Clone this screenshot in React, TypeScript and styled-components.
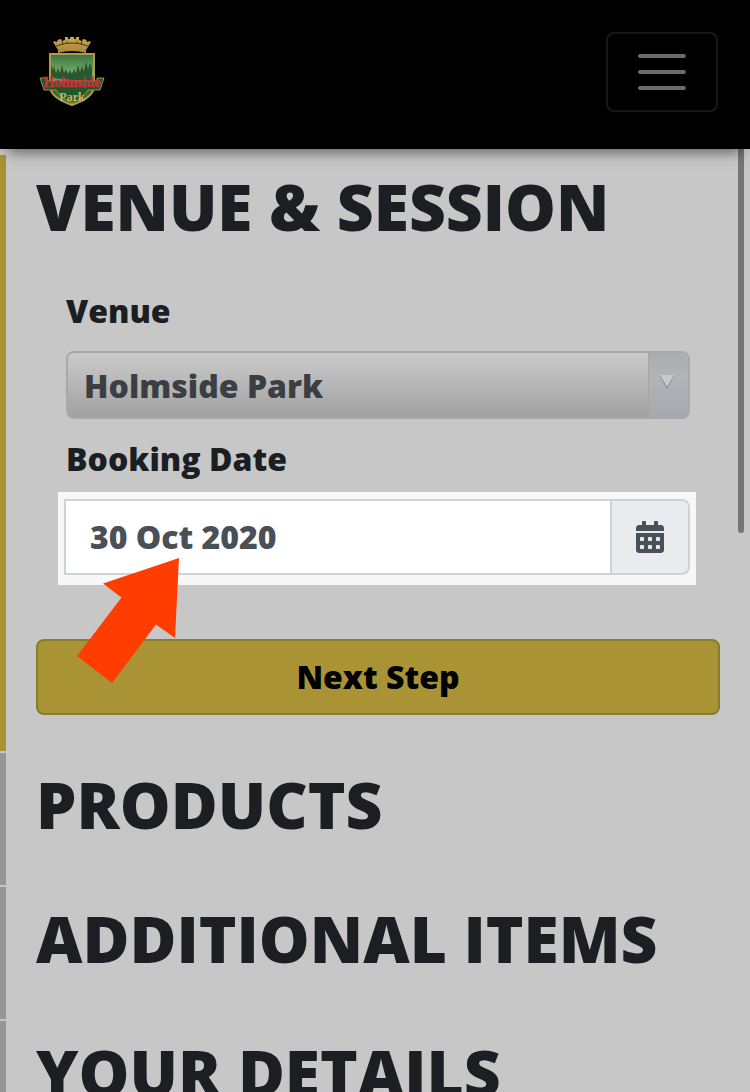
import React from "react";
import styled, { createGlobalStyle } from "styled-components";
import { FaCalendarAlt } from "react-icons/fa";

const GlobalStyle = createGlobalStyle`
  *, *::before, *::after { box-sizing: border-box; }
  body {
    margin: 0;
    background: #c7c7c7;
    color: #1b1e22;
    font-family: "Open Sans", "Noto Sans", sans-serif;
    font-size: 32px;
    font-weight: 800;
    line-height: 48px;
  }
`;

const Shell = styled.div`
  display: flex;
  flex-direction: column;
  height: 100vh;
  overflow: hidden;
`;

const Header = styled.header`
  position: relative;
  z-index: 2;
  flex: none;
  display: flex;
  align-items: flex-start;
  justify-content: space-between;
  padding: 32px 32px 37px 38px;
  background: #000;
  box-shadow: 0 10px 14px -8px rgba(0, 0, 0, 0.6);
`;

const Brand = styled.a`
  display: block;
  padding-top: 4px;
  line-height: 0;
`;

const Toggler = styled.button`
  display: flex;
  flex-direction: column;
  align-items: center;
  justify-content: center;
  gap: 12px;
  width: 112px;
  height: 80px;
  padding: 0;
  border: 2px solid #181818;
  border-radius: 8px;
  background: transparent;
`;

const TogglerBar = styled.span`
  width: 48px;
  height: 4px;
  border-radius: 2px;
  background: #6b6b6b;
`;

const Steps = styled.main`
  position: relative;
  flex: 1;
  min-height: 0;
  overflow: hidden;
  display: flex;
  flex-direction: column;
  gap: 2px;
  padding-top: 6px;
`;

const Step = styled.section<{ $active?: boolean }>`
  flex: none;
  padding: 16px 30px ${(p) => (p.$active ? "36px" : "44px")};
  border-left: 6px solid ${(p) => (p.$active ? "#aa9335" : "#969696")};
`;

const StepTitle = styled.h2`
  margin: 0;
  font-size: 64px;
  font-weight: 800;
  line-height: 72px;
  text-transform: uppercase;
  white-space: nowrap;
`;

const Form = styled.form`
  margin-top: 44px;
`;

const Fields = styled.div`
  padding: 0 30px;
`;

const Label = styled.label`
  display: block;
`;

const SelectWrap = styled.div`
  position: relative;
  margin: 16px 0;
`;

const VenueSelect = styled.select`
  display: block;
  width: 100%;
  height: 68px;
  padding: 2px 58px 0 16px;
  appearance: none;
  border: 2px solid #a6a9ac;
  border-radius: 8px;
  background: linear-gradient(#cbcbcb, #a1a1a1);
  color: #3b3f44;
  font: inherit;
`;

const SelectArrow = styled.span`
  position: absolute;
  top: 2px;
  right: 2px;
  bottom: 2px;
  display: flex;
  align-items: center;
  justify-content: center;
  width: 40px;
  padding: 0 4px 6px 0;
  border-left: 1px solid #a2a6a9;
  border-radius: 0 6px 6px 0;
  background: linear-gradient(#aaaeb1, #b0b4b7 40%, #a6a9ad);
  pointer-events: none;
`;

const Spotlight = styled.div`
  position: relative;
  margin: 9px -6px 54px -8px;
  padding: 7px 6px 10px;
  background: #f7f7f7;
`;

const DateGroup = styled.div`
  display: flex;
  height: 76px;
`;

const DateInput = styled.input`
  flex: 1;
  min-width: 0;
  padding: 0 24px;
  border: 2px solid #ced2d6;
  border-radius: 0;
  background: #fff;
  color: #495057;
  font: inherit;
`;

const DateButton = styled.button`
  display: flex;
  align-items: center;
  justify-content: center;
  width: 78px;
  padding: 0;
  border: 2px solid #ced2d6;
  border-left: 0;
  border-radius: 0 8px 8px 0;
  background: #e8ecef;
  color: #495057;
`;

const Pointer = styled.svg`
  position: absolute;
  left: 19px;
  top: 66px;
  pointer-events: none;
`;

const NextButton = styled.button`
  display: block;
  width: 100%;
  height: 76px;
  border: 2px solid #857c2d;
  border-radius: 8px;
  background: #aa9335;
  color: #000;
  font: inherit;
`;

const ScrollThumb = styled.div`
  position: absolute;
  top: -6px;
  right: 6px;
  width: 6px;
  height: 390px;
  border-radius: 3px;
  background: #757575;
`;

function Logo() {
  return (
    <svg width="68" height="72" viewBox="0 0 68 72" role="img" aria-label="Holmside Park">
      <defs>
        <linearGradient id="sky" x1="0" y1="0" x2="0" y2="1">
          <stop offset="0" stopColor="#35743c" />
          <stop offset="0.4" stopColor="#7fae70" />
          <stop offset="0.75" stopColor="#2f6a2c" />
          <stop offset="1" stopColor="#3f8a2c" />
        </linearGradient>
        <linearGradient id="crown" x1="0" y1="0" x2="0" y2="1">
          <stop offset="0" stopColor="#c9a94e" />
          <stop offset="1" stopColor="#a5843a" />
        </linearGradient>
      </defs>
      <path
        d="M15 6l2-1 1 1 2-1-1-1 4-1 1 2 3-1V1h3v2h2V1h4v2h2V1h3v3l3 1 1-2 4 1-1 1 2 1 1-1 2 1-5 8v3q-14-4-28 0v-3z"
        fill="url(#crown)"
      />
      <path d="M18 10q16-6 32 0M24 5l1 4M44 5l-1 4M29 5v3M39 5v3" stroke="#4e3b12" strokeWidth="1" fill="none" />
      <path d="M12 18h44v33q-1 11-22 18Q13 62 12 51z" fill="url(#sky)" stroke="#b5994b" strokeWidth="2" />
      <path
        d="M13 42V29l2 5 1-4 2 7 2-5 2 5 2-8 2 8 2-4 2 5 2-4 2 4 2-5 2 4 2-8 2 7 2-6 2 5 2-9 2 7 2-6 2 5v14z"
        fill="#27582f"
      />
      <path d="M2 42h7v3h50v-3h7l-4 12H50q-5 8-16 13-11-5-16-13H6z" fill="#1d5a2a" stroke="#a88b40" strokeWidth="1" />
      <g textAnchor="middle" fontFamily="Liberation Serif, serif" fontWeight="700">
        <text x="34" y="51" fontSize="14" fill="#c8323a" stroke="#c8323a" strokeWidth="0.5">
          Holmside
        </text>
        <text x="34" y="65" fontSize="12" fill="#cbb46c">
          Park
        </text>
      </g>
    </svg>
  );
}

export default function App() {
  return (
    <>
      <GlobalStyle />
      <Shell>
        <Header>
          <Brand href="#">
            <Logo />
          </Brand>
          <Toggler type="button" aria-label="Toggle navigation">
            <TogglerBar />
            <TogglerBar />
            <TogglerBar />
          </Toggler>
        </Header>
        <Steps>
          <Step $active>
            <StepTitle>Venue &amp; Session</StepTitle>
            <Form onSubmit={(e) => e.preventDefault()}>
              <Fields>
                <Label htmlFor="venue">Venue</Label>
                <SelectWrap>
                  <VenueSelect id="venue" defaultValue="holmside">
                    <option value="holmside">Holmside Park</option>
                  </VenueSelect>
                  <SelectArrow>
                    <svg width="14" height="14" viewBox="0 0 14 14" aria-hidden="true">
                      <path d="M0 1h14L7 14z" fill="#808488" />
                      <path d="M0 0h14L7 12z" fill="#cacaca" />
                    </svg>
                  </SelectArrow>
                </SelectWrap>
                <Label htmlFor="date">Booking Date</Label>
                <Spotlight>
                  <DateGroup>
                    <DateInput id="date" type="text" defaultValue="30 Oct 2020" />
                    <DateButton type="button" aria-label="Choose date">
                      <FaCalendarAlt size={32} />
                    </DateButton>
                  </DateGroup>
                  <Pointer width="102" height="125" viewBox="0 0 102 125" aria-hidden="true">
                    <path d="M102 0L26 25.500 44.500 39.500 0 98l35 27 44-58.500L98 80z" fill="#ff3d00" />
                  </Pointer>
                </Spotlight>
              </Fields>
              <NextButton type="submit">Next Step</NextButton>
            </Form>
          </Step>
          <Step>
            <StepTitle>Products</StepTitle>
          </Step>
          <Step>
            <StepTitle>Additional Items</StepTitle>
          </Step>
          <Step>
            <StepTitle>Your Details</StepTitle>
          </Step>
          <ScrollThumb />
        </Steps>
      </Shell>
    </>
  );
}
